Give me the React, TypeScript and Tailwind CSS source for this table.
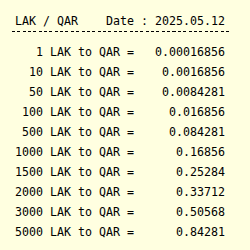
const rows: [number, string][] = [
  [1, "0.00016856"],
  [10, "0.0016856"],
  [50, "0.0084281"],
  [100, "0.016856"],
  [500, "0.084281"],
  [1000, "0.16856"],
  [1500, "0.25284"],
  [2000, "0.33712"],
  [3000, "0.50568"],
  [5000, "0.84281"],
];

export default function App() {
  return (
    <div className="h-[250px] w-[250px] overflow-hidden bg-[#ffffe0] pt-[11px] text-[11.63px] leading-5 text-black [font-family:'DejaVu_Sans_Mono',monospace]">
      <div className="pl-[15px] whitespace-pre">{"LAK / QAR    Date : 2025.05.12"}</div>
      <div className="ml-[12px] h-px w-[219px] bg-[repeating-linear-gradient(to_right,#000_0_3px,transparent_3px_5.35px)]" />
      <div className="mt-[10px] flex flex-col pl-[15px]">
        {rows.map(([amount, value]) => (
          <div key={amount} className="whitespace-pre">
            {`${String(amount).padStart(4, " ")} LAK to QAR = ${value.padStart(12, " ")}`}
          </div>
        ))}
      </div>
    </div>
  );
}
